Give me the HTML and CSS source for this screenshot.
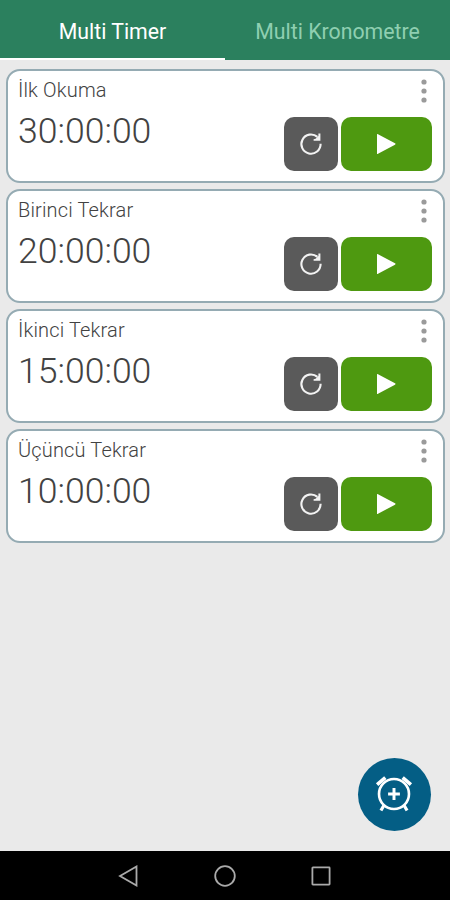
FILE: index.html
```html
<!DOCTYPE html>
<html lang="tr">
<head>
  <meta charset="UTF-8" />
  <meta name="viewport" content="width=device-width, initial-scale=1.0"/>
  <title>Multi Timer</title>
  <link rel="stylesheet" href="styles.css">
</head>
<body>
  <!-- Icons -->
  <svg class="icon-defs" width="0" height="0">
    <symbol id="icon-reset" viewBox="0 0 24 24">
      <path d="M21.6 11.8A9.6 9.6 0 1 1 18.4 4.9" fill="none" stroke="#f2f2f2" stroke-width="2.1"/>
      <path d="M21.4 1.4V8.8H14.6V7.3L16.6 6.8L19.4 4V1.4Z" fill="#f2f2f2"/>
    </symbol>
    <symbol id="icon-play" viewBox="0 0 20 20">
      <path d="M1 0.6V19.4Q1 20.4 2 19.8L19 10.7Q20 10 19 9.3L2 0.2Q1 -0.4 1 0.6Z" fill="#fff"/>
    </symbol>
    <symbol id="icon-more" viewBox="0 0 6 24">
      <circle cx="3" cy="3" r="2.6"/>
      <circle cx="3" cy="12" r="2.6"/>
      <circle cx="3" cy="21" r="2.6"/>
    </symbol>
  </svg>

  <nav class="tabs">
    <button class="tab active">Multi Timer</button>
    <button class="tab">Multi Kronometre</button>
  </nav>

  <main class="timers">
    <section class="timer">
      <div class="info">
        <div class="name">İlk Okuma</div>
        <div class="time">30:00:00</div>
      </div>
      <div class="controls">
        <svg class="more"><use href="#icon-more"/></svg>
        <div class="buttons">
          <button class="reset"><svg><use href="#icon-reset"/></svg></button>
          <button class="play"><svg><use href="#icon-play"/></svg></button>
        </div>
      </div>
    </section>

    <section class="timer">
      <div class="info">
        <div class="name">Birinci Tekrar</div>
        <div class="time">20:00:00</div>
      </div>
      <div class="controls">
        <svg class="more"><use href="#icon-more"/></svg>
        <div class="buttons">
          <button class="reset"><svg><use href="#icon-reset"/></svg></button>
          <button class="play"><svg><use href="#icon-play"/></svg></button>
        </div>
      </div>
    </section>

    <section class="timer">
      <div class="info">
        <div class="name">İkinci Tekrar</div>
        <div class="time">15:00:00</div>
      </div>
      <div class="controls">
        <svg class="more"><use href="#icon-more"/></svg>
        <div class="buttons">
          <button class="reset"><svg><use href="#icon-reset"/></svg></button>
          <button class="play"><svg><use href="#icon-play"/></svg></button>
        </div>
      </div>
    </section>

    <section class="timer">
      <div class="info">
        <div class="name">Üçüncü Tekrar</div>
        <div class="time">10:00:00</div>
      </div>
      <div class="controls">
        <svg class="more"><use href="#icon-more"/></svg>
        <div class="buttons">
          <button class="reset"><svg><use href="#icon-reset"/></svg></button>
          <button class="play"><svg><use href="#icon-play"/></svg></button>
        </div>
      </div>
    </section>
  </main>

  <!-- Add timer -->
  <button class="add">
    <svg width="38" height="38" viewBox="0 0 36 36" fill="none" stroke="#fff" stroke-width="2.5">
      <circle cx="18" cy="18" r="14.2"/>
      <path d="M18 12.4V23.6M12.4 18H23.6" stroke-width="2.8"/>
      <path d="M2 9.2L9.8 2.4M34 9.2L26.2 2.4" stroke-width="3.4"/>
      <path d="M8.6 28.5L5.6 33.6M27.4 28.5L30.4 33.6" stroke-width="3"/>
    </svg>
  </button>

  <!-- System bar -->
  <footer class="navbar">
    <svg width="22" height="22" viewBox="0 0 22 22"><path d="M2 11L18.5 1.5V20.5Z"/></svg>
    <svg width="22" height="22" viewBox="0 0 22 22"><circle cx="11" cy="11" r="9.8"/></svg>
    <svg width="22" height="22" viewBox="0 0 22 22"><rect x="2.4" y="2.4" width="17.2" height="17.2" rx="0.5"/></svg>
  </footer>
</body>
</html>
```

FILE: styles.css
```css
* {
  box-sizing: border-box;
}

body {
  display: flex;
  flex-direction: column;
  height: 900px;
  margin: 0;
  font-family: Roboto, sans-serif;
  background: #eaeaea;
  color: #424242;
}

button {
  display: flex;
  align-items: center;
  justify-content: center;
  padding: 0;
  border: none;
  font-family: inherit;
  cursor: pointer;
}

.icon-defs {
  position: absolute;
}

.tabs {
  display: flex;
  height: 60px;
  background: #2b805e;
}

.tab {
  flex: 1;
  padding-top: 5px;
  background: none;
  border-bottom: 2px solid #2b805e;
  color: #8fcfb1;
  font-size: 21.3px;
}

.tab.active {
  border-bottom-color: #fff;
  color: #fff;
}

.timers {
  display: flex;
  flex: 1;
  flex-direction: column;
  gap: 6px;
  padding: 9px 5px 0 6px;
}

.timer {
  display: flex;
  justify-content: space-between;
  height: 114px;
  padding: 7px 11px 0 10px;
  background: #fff;
  border: 2px solid #95abb3;
  border-radius: 14px;
}

.name {
  font-size: 20px;
  font-weight: 300;
  letter-spacing: 0.15px;
  line-height: 24px;
}

.time {
  margin-top: 7px;
  font-size: 35.6px;
  font-weight: 300;
  line-height: 44px;
}

.controls {
  display: flex;
  flex-direction: column;
  align-items: flex-end;
}

.more {
  width: 6px;
  height: 24px;
  margin: 1px 5px 0 0;
  fill: #9a9a9a;
}

.buttons {
  display: flex;
  gap: 3px;
  margin-top: 14px;
}

.reset,
.play {
  height: 54px;
  border-radius: 10px;
}

.reset {
  width: 54px;
  background: #5a5a5a;
}

.reset svg {
  width: 24px;
  height: 24px;
}

.play {
  width: 91px;
  padding-right: 2px;
  background: #4e9910;
}

.play svg {
  width: 20px;
  height: 20px;
}

.add {
  align-self: flex-end;
  width: 73px;
  height: 73px;
  margin: 0 19px 20px 0;
  padding: 0 1px 1px 0;
  background: #045e85;
  border-radius: 50%;
}

.navbar {
  display: flex;
  align-items: center;
  justify-content: center;
  gap: 74px;
  height: 49px;
  background: #000;
}

.navbar svg {
  fill: none;
  stroke: #aaa;
  stroke-width: 1.8;
}
```
